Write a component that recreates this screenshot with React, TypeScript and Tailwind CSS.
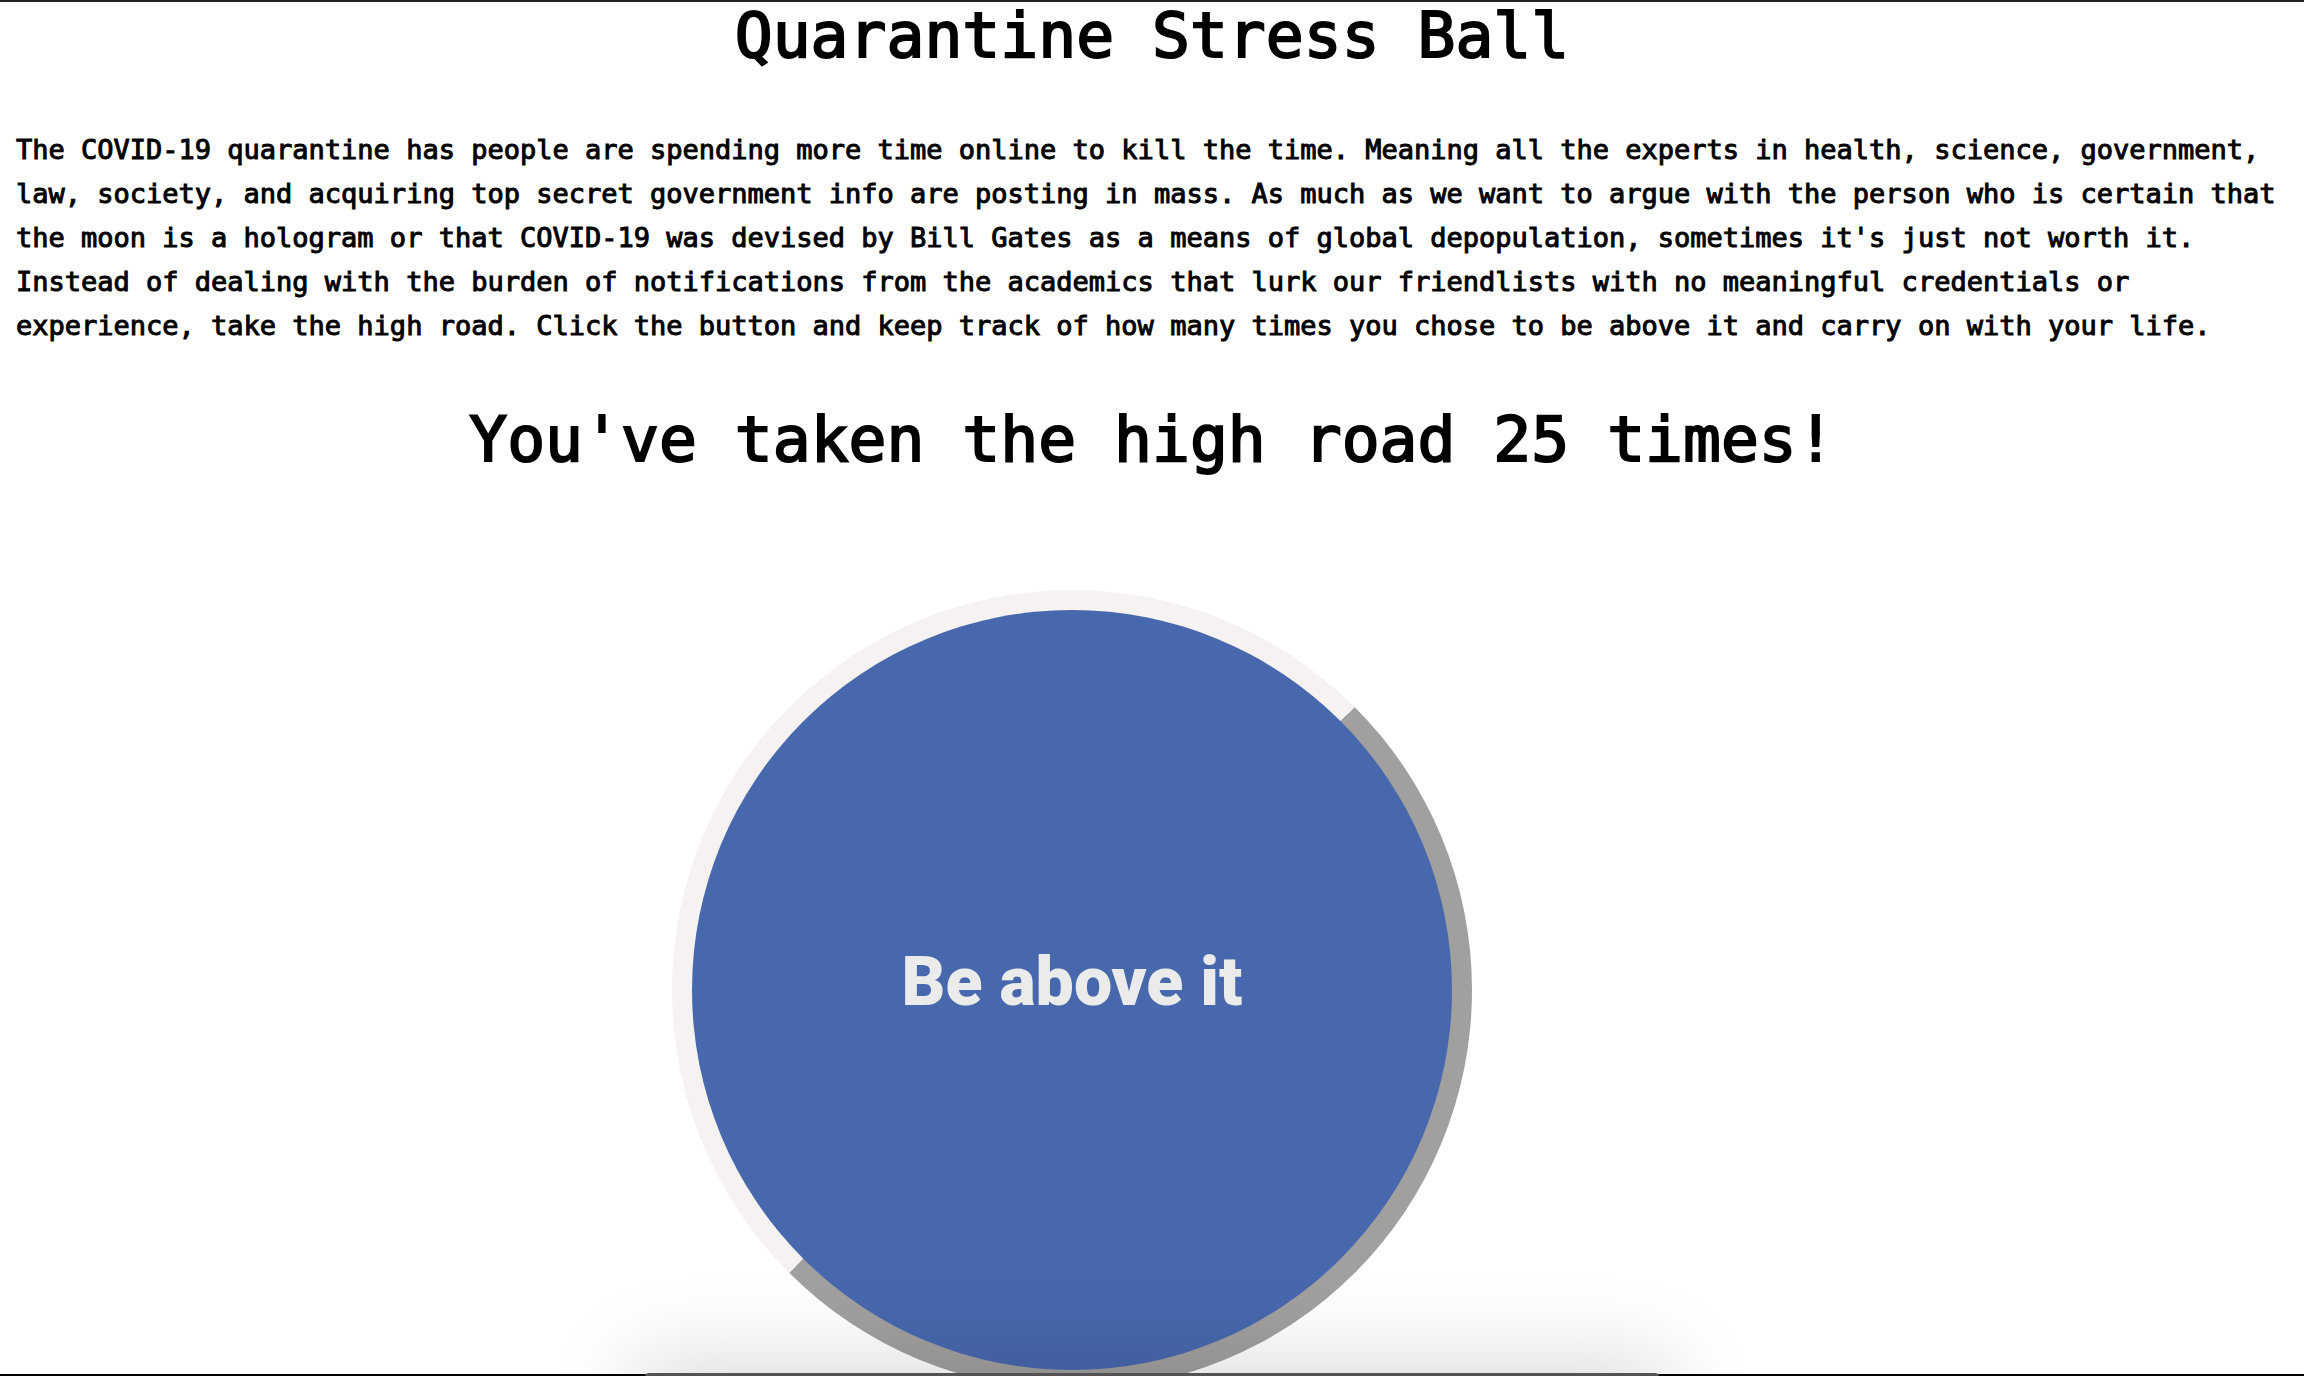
import { useState } from "react";

export default function App() {
  const [count, setCount] = useState(25);

  return (
    <div className="relative h-screen overflow-hidden border-t-2 border-[#242424] bg-white font-['DejaVu_Sans_Mono',monospace] text-black">
      <main className="flex flex-col pt-0.5">
        <h1 className="text-center text-[63px] leading-16 [-webkit-text-stroke:2px_black]">Quarantine Stress Ball</h1>
        <p className="mt-15 pr-2 pl-4 text-[27px] leading-11 [-webkit-text-stroke:1px_black]">
          The COVID-19 quarantine has people are spending more time online to kill the time. Meaning all the
          experts in health, science, government, law, society, and acquiring top secret government info are
          posting in mass. As much as we want to argue with the person who is certain that the moon is a
          hologram or that COVID-19 was devised by Bill Gates as a means of global depopulation, sometimes
          it's just not worth it. Instead of dealing with the burden of notifications from the academics that
          lurk our friendlists with no meaningful credentials or experience, take the high road. Click the
          button and keep track of how many times you chose to be above it and carry on with your life.
        </p>
        <h2 className="mt-[54px] text-center text-[63px] leading-19 [-webkit-text-stroke:2px_black]">
          You've taken the high road {count} times!
        </h2>
        <div className="mt-28 flex justify-center pr-40">
          <button
            type="button"
            onClick={() => setCount(count + 1)}
            className="size-200 shrink-0 rounded-full border-20 border-t-[#f6f2f2] border-r-[#a2a09e] border-b-[#a2a09e] border-l-[#f6f2f2] bg-[#4868ae] pb-4 font-['Roboto',sans-serif] text-[68px] font-black text-[#ebebeb]"
          >
            Be above it
          </button>
        </div>
      </main>
      <div className="pointer-events-none absolute inset-x-0 bottom-0 h-0.5 bg-black" />
      <div className="pointer-events-none absolute inset-x-0 top-full -mt-[3px] flex justify-center">
        <div className="h-60 w-[44%] rounded-t-sm bg-[#545252] shadow-[0_0_90px_12px_rgba(0,0,0,0.15)]" />
      </div>
    </div>
  );
}
